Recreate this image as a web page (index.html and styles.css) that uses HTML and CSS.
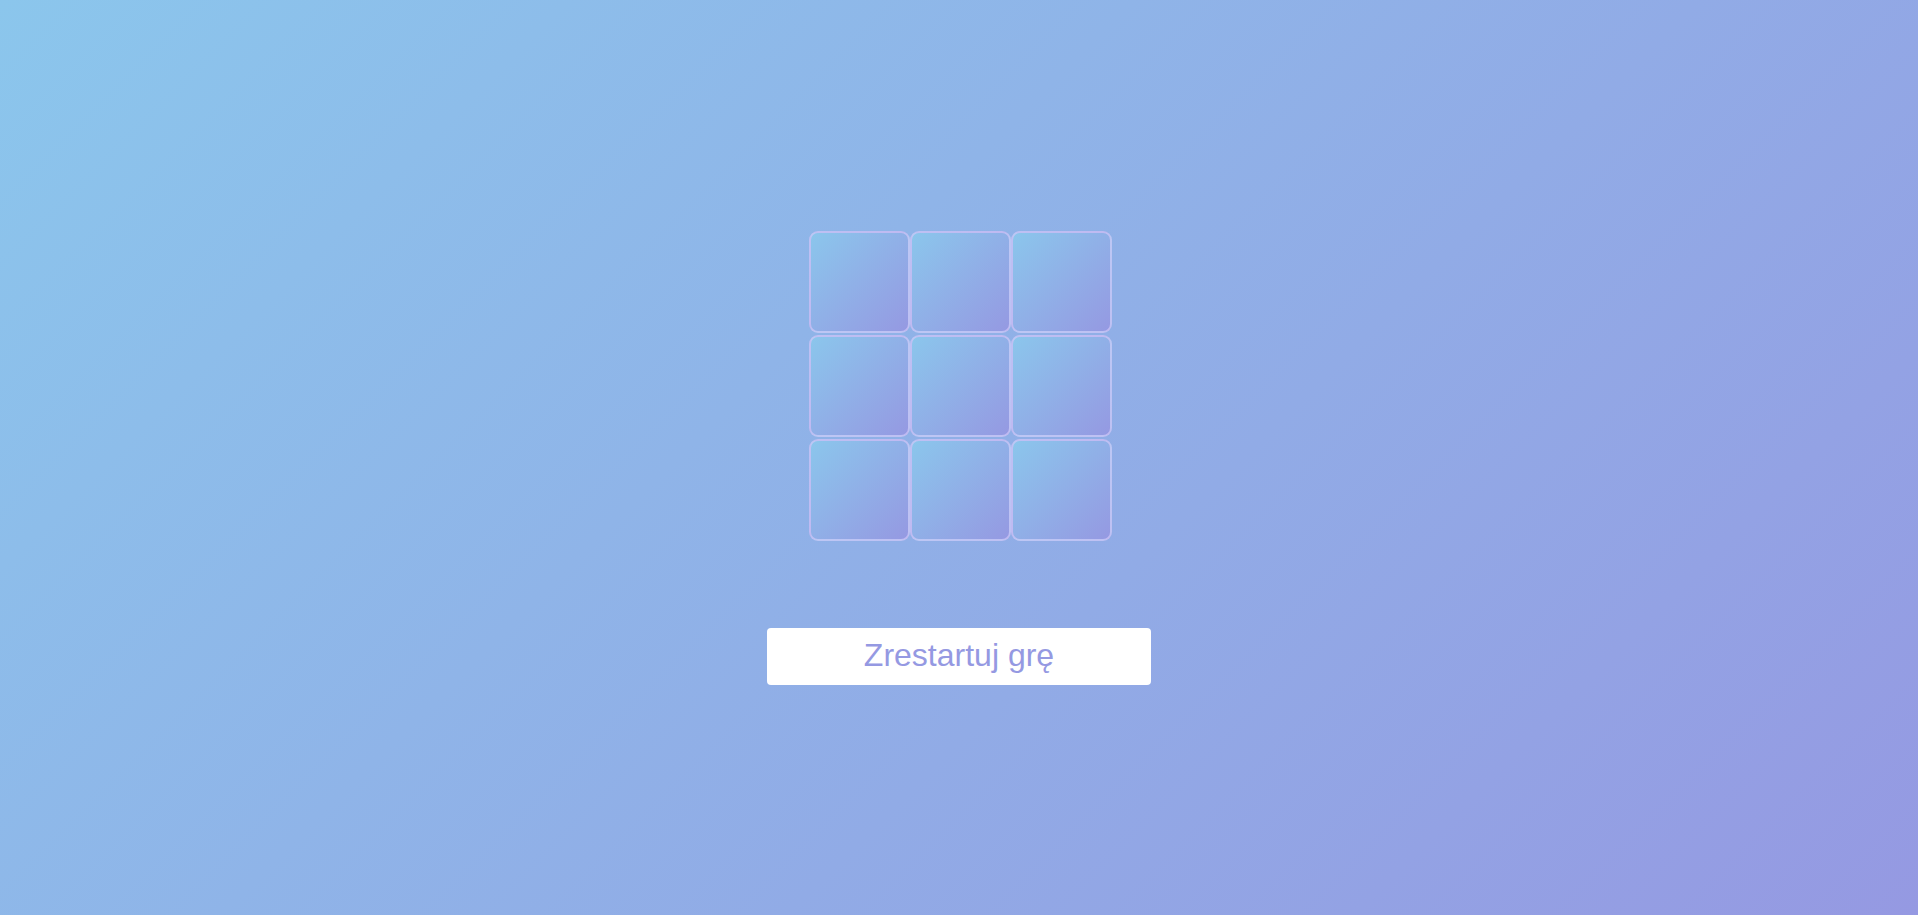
FILE: index.html
```html
<!DOCTYPE html>
<html lang="pl">
<head>
<meta charset="utf-8">
<title>Kółko i krzyżyk</title>
<link rel="stylesheet" href="styles.css">
</head>
<body>
<main class="game">
  <div class="board">
    <div class="cell"></div><div class="cell"></div><div class="cell"></div>
    <div class="cell"></div><div class="cell"></div><div class="cell"></div>
    <div class="cell"></div><div class="cell"></div><div class="cell"></div>
  </div>
  <button class="restart">Zrestartuj grę</button>
</main>
</body>
</html>
```
FILE: styles.css
```css
html, body {
  margin: 0;
  height: 100%;
}
body {
  background-image: linear-gradient(135deg, #8bc6ec 0%, #9599e2 100%);
  font-family: "Liberation Sans", Arial, sans-serif;
}
.game {
  height: 100%;
  display: flex;
  flex-direction: column;
  align-items: center;
  justify-content: center;
  gap: 87px;
}
.board {
  display: grid;
  grid-template-columns: repeat(3, 101px);
  grid-template-rows: repeat(3, 102px);
  row-gap: 2px;
  margin-left: 3px;
}
.cell {
  box-sizing: border-box;
  border: 2px solid rgba(210, 200, 248, 0.7);
  border-radius: 9px;
  background-image: linear-gradient(135deg, #8bc6ec 0%, #9599e2 100%);
}
.restart {
  width: 384px;
  height: 57px;
  border: none;
  border-radius: 4px;
  background: #fff;
  color: #9599e2;
  font-family: "Liberation Sans", Arial, sans-serif;
  font-size: 32px;
  line-height: 1;
  padding: 0 0 2px;
}
```
